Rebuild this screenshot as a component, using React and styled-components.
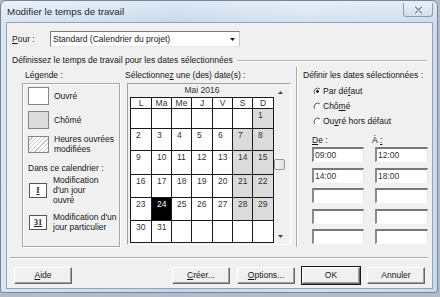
import React from 'react';
import styled, { createGlobalStyle } from 'styled-components';

const Global = createGlobalStyle`
  html, body { margin: 0; padding: 0; }
  body {
    width: 440px; height: 297px; overflow: hidden;
    background: #b3bcc6;
    font-family: "Liberation Sans", Arial, sans-serif;
    color: #151515;
  }
  u { text-decoration: underline; text-underline-offset: 1px; }
`;

const Window = styled.div`
  width: 438px; height: 293px; box-sizing: border-box;
  border: 1px solid #75869a;
  border-radius: 6px 6px 3px 3px;
  background: linear-gradient(90deg, rgba(255,255,255,0.35), rgba(255,255,255,0) 40%, rgba(255,255,255,0.25) 70%, rgba(255,255,255,0.1)),
    linear-gradient(180deg, #dfe9f5 0px, #c9d9ec 21px, #c4d5e9 100%);
  padding: 0 4px 3px 5px;
  display: flex; flex-direction: column;
`;

const TitleBar = styled.div`
  height: 21px; display: flex; justify-content: space-between; align-items: center;
  padding-left: 1px;
`;

const Title = styled.span`
  font-family: "Liberation Sans", Arial, sans-serif;
  font-size: 9.8px; color: #1c2733; line-height: 12px; margin-top: 1px;
`;

const CloseBtn = styled.div`
  align-self: flex-start; margin-top: 2px;
  width: 30px; height: 14px; box-sizing: border-box;
  border: 1px solid #8b9db3; border-top: none;
  border-radius: 0 0 3px 3px;
  background: linear-gradient(180deg, #e8f0f9, #cfdcec);
  display: flex; align-items: center; justify-content: center;
`;

const Client = styled.div`
  flex: 1; box-sizing: border-box;
  border: 1px solid #93a4b8;
  background: #f0f0f0;
  display: flex; flex-direction: column;
  font-size: 8.5px; line-height: 11px;
`;

const PourRow = styled.div`
  margin-top: 8px; padding-left: 5px; height: 16px;
  display: flex; align-items: center;
`;

const PourLabel = styled.span`
  width: 38px;
`;

const Combo = styled.div`
  width: 190px; height: 16px; box-sizing: border-box;
  background: #fff;
  border-top: 1px solid #7c7c7c; border-left: 1px solid #7c7c7c;
  border-right: 1px solid #c8c8c8; border-bottom: 1px solid #e6e6e6;
  display: flex; align-items: center; justify-content: space-between;
  padding-left: 2px;
`;

const ComboArrow = styled.div`
  width: 12px; height: 12px; margin-right: 1px;
  display: flex; align-items: center; justify-content: center;
`;

const GroupHeader = styled.div`
  margin-top: 8px; padding: 0 5px; height: 11px;
  display: flex; align-items: center;
`;

const Etched = styled.div`
  flex: 1; margin-left: 4px; height: 0;
  border-top: 1px solid #b4b4b4; border-bottom: 1px solid #fff;
`;

const Columns = styled.div`
  margin-top: 4px; padding-left: 15px; height: 177px;
  display: flex;
`;

const LegendCol = styled.div`
  width: 98px; display: flex; flex-direction: column;
`;

const ColLabel = styled.div`
  height: 11px; padding-left: ${p => p.$pl || 0}px; white-space: nowrap;
`;

const LegendPanel = styled.div`
  margin-top: 2px; height: 164px; box-sizing: border-box;
  border: 1px solid #a8a8a8;
  box-shadow: inset 1px 1px 0 #fff, 1px 1px 0 #fff;
  padding: 3px 2px 0 5px;
  display: flex; flex-direction: column;
`;

const LegendItem = styled.div`
  display: flex; align-items: center; gap: 5px;
  height: ${p => p.$h}px; margin-top: ${p => p.$mt || 0}px;
  white-space: nowrap; line-height: 10px;
`;

const Swatch = styled.div`
  width: 21px; height: ${p => p.$h || 18}px; box-sizing: border-box; flex: none;
  border: 1px solid #858585;
  background: ${p => p.$kind === 'off' ? '#dcdcdc' : p.$kind === 'hatch'
    ? 'repeating-linear-gradient(135deg, #fff 0 2px, #c4c4c4 2px 3px)' : '#fff'};
`;

const IconBox = styled.div`
  width: 18px; height: 15px; box-sizing: border-box; flex: none;
  margin: 0 1px;
  border: 1px solid #555; background: #fff;
  display: flex; align-items: center; justify-content: center;
  font-family: "Liberation Serif", "Times New Roman", serif;
  font-weight: bold; font-size: 8.5px; color: #222;
  text-decoration: underline; text-underline-offset: 1px;
`;

const Caption = styled.div`
  margin-top: ${p => p.$mt}px; height: 11px; padding-left: 0; white-space: nowrap;
`;

const CalendarCol = styled.div`
  margin-left: 5px; display: flex; flex-direction: column;
`;

const CalBox = styled.div`
  margin: 2px 0 0 2px; width: 164px; height: 162px; box-sizing: border-box;
  border-top: 1px solid #a0a0a0; border-left: 1px solid #a0a0a0;
  border-right: 1px solid #fff; border-bottom: 1px solid #fff;
  padding: 0 2px 0 2px;
  display: flex;
`;

const MonthArea = styled.div`
  display: flex; flex-direction: column;
`;

const MonthTitle = styled.div`
  margin-top: 1px; height: 11px; text-align: center; color: #333;
`;

const Grid = styled.div`
  margin-top: 1px;
  display: grid;
  grid-template-columns: 20px 19px 19px 20px 19px 19px 20px;
  grid-template-rows: 10px 19px 21px 23px 22px 22px 21px;
  gap: 1px; padding: 1px;
  background: #1a1a1a;
`;

const Cell = styled.div`
  background: ${p => p.$sel ? '#000' : p.$we ? '#dbdbdb' : '#fff'};
  color: ${p => p.$sel ? '#fff' : '#333'};
  font-size: 8.5px; line-height: 10px;
  padding: ${p => p.$head ? '0' : '1px 0 0 5px'};
  text-align: ${p => p.$head ? 'center' : 'left'};
`;

const ScrollCol = styled.div`
  width: 14px; display: flex; flex-direction: column; align-items: flex-start;
  padding: 7px 0 6px 0; box-sizing: border-box;
`;

const ScrollArrow = styled.svg`
  margin-left: 4px; margin-top: ${p => p.$bottom ? 'auto' : '0'}; display: block;
`;

const Thumb = styled.div`
  margin-top: 65px; width: 11px; height: 11px; box-sizing: border-box;
  border: 1px solid #979797; border-radius: 2px;
  background: linear-gradient(90deg, #f6f6f6, #e2e2e2);
`;

const VSep = styled.div`
  margin: -3px 0 0 5px; height: 180px; width: 0;
  border-left: 1px solid #a8a8a8; border-right: 1px solid #fff;
`;

const DatesCol = styled.div`
  margin-left: 5px; flex: 1; display: flex; flex-direction: column;
`;

const Radios = styled.div`
  margin-top: 4px; padding-left: 10px;
  display: flex; flex-direction: column; gap: 3px;
`;

const RadioRow = styled.div`
  height: 12px; display: flex; align-items: center; gap: 1px; white-space: nowrap;
`;

const TimeLabels = styled.div`
  margin-top: 8px; padding-left: 9px; height: 11px;
  display: grid; grid-template-columns: 52px 53px; column-gap: 11px;
`;

const TimeLabel = styled.span`
  margin-left: ${p => p.$ml || 0}px;
`;

const TimeGrid = styled.div`
  margin-top: 1px; padding-left: 9px;
  display: grid; grid-template-columns: 52px 53px; column-gap: 11px; row-gap: 5.5px;
`;

const TimeInput = styled.div`
  height: 15px; box-sizing: border-box;
  background: #fff;
  border-top: 2px solid #777; border-left: 2px solid #8a8a8a;
  border-right: 1px solid #e3e3e3; border-bottom: 1px solid #fff;
  padding-left: 1px; line-height: 12px; color: #333;
`;

const HSep = styled.div`
  margin: 10px 4px 0 3px; height: 0;
  border-top: 1px solid #a8a8a8; border-bottom: 1px solid #fff;
`;

const ButtonRow = styled.div`
  margin-top: 8px; padding: 0 7px; height: 17px;
  display: flex; gap: 7px;
`;

const Spacer = styled.div`flex: 1;`;

const Button = styled.div`
  width: 58px; height: 17px; box-sizing: border-box;
  background: #f0f0f0;
  border-top: 1px solid #fff; border-left: 1px solid #fff;
  border-right: 1px solid #6a6a6a; border-bottom: 1px solid #6a6a6a;
  box-shadow: ${p => p.$def ? '0 0 0 1px #1a1a1a, ' : ''}inset -1px -1px 0 #a0a0a0;
  display: flex; align-items: center; justify-content: center;
  color: #151515;
`;

const Radio = ({ on }) => (
  <svg width="9" height="9" viewBox="0 0 9 9" style={{ flex: 'none' }}>
    <circle cx="4.5" cy="4.5" r="3.5" fill="#fff" />
    <path d="M2.03 6.97 A3.5 3.5 0 0 1 6.97 2.03" fill="none" stroke="#505050" strokeWidth="1" />
    <path d="M6.97 2.03 A3.5 3.5 0 0 1 2.03 6.97" fill="none" stroke="#f4f4f4" strokeWidth="1" />
    {on && <circle cx="4.5" cy="4.5" r="1.4" fill="#111" />}
  </svg>
);

const heads = ['L', 'Ma', 'Me', 'J', 'V', 'S', 'D'];

export default function App() {
  const cells = [];
  for (let i = 0; i < 42; i++) {
    const day = i - 5;
    const col = i % 7;
    const valid = day >= 1 && day <= 31;
    cells.push(
      <Cell key={i} $we={valid && col >= 5} $sel={day === 24}>
        {valid ? day : ''}
      </Cell>
    );
  }
  const times = [['09:00', '12:00'], ['14:00', '18:00'], ['', ''], ['', ''], ['', '']];
  return (
    <>
      <Global />
      <Window>
        <TitleBar>
          <Title>Modifier le temps de travail</Title>
          <CloseBtn>
            <svg width="9" height="8" viewBox="0 0 9 8">
              <path d="M1.5 1 L7.5 7 M7.5 1 L1.5 7" stroke="#fff" strokeWidth="3" strokeLinecap="round" />
              <path d="M1.5 1 L7.5 7 M7.5 1 L1.5 7" stroke="#6c7a8c" strokeWidth="1.4" strokeLinecap="round" />
            </svg>
          </CloseBtn>
        </TitleBar>
        <Client>
          <PourRow>
            <PourLabel><u>P</u>our :</PourLabel>
            <Combo>
              <span>Standard (Calendrier du projet)</span>
              <ComboArrow>
                <svg width="5" height="3" viewBox="0 0 5 3"><path d="M0 0 H5 L2.5 3 Z" fill="#111" /></svg>
              </ComboArrow>
            </Combo>
          </PourRow>
          <GroupHeader>
            <span>Définissez le temps de travail pour les dates sélectionnées</span>
            <Etched />
          </GroupHeader>
          <Columns>
            <LegendCol>
              <ColLabel $pl={3}>Légende :</ColLabel>
              <LegendPanel>
                <LegendItem $h={18}><Swatch $kind="work" /><span>Ouvré</span></LegendItem>
                <LegendItem $h={18} $mt={6}><Swatch $kind="off" /><span>Chômé</span></LegendItem>
                <LegendItem $h={20} $mt={5}><Swatch $kind="hatch" $h={17} /><span>Heures ouvrées<br />modifiées</span></LegendItem>
                <Caption $mt={9}>Dans ce calendrier :</Caption>
                <LegendItem $h={30} $mt={1}><IconBox>I</IconBox><span>Modification<br />d'un jour<br />ouvré</span></LegendItem>
                <LegendItem $h={20} $mt={7}><IconBox>31</IconBox><span>Modification d'un<br />jour particulier</span></LegendItem>
              </LegendPanel>
            </LegendCol>
            <CalendarCol>
              <ColLabel>Sélectionne<u>z</u> une (des) date(s) :</ColLabel>
              <CalBox>
                <MonthArea>
                  <MonthTitle>Mai 2016</MonthTitle>
                  <Grid>
                    {heads.map(h => <Cell key={h} $head>{h}</Cell>)}
                    {cells}
                  </Grid>
                </MonthArea>
                <ScrollCol>
                  <ScrollArrow width="5" height="3" viewBox="0 0 5 3"><path d="M0 3 H5 L2.5 0 Z" fill="#444" /></ScrollArrow>
                  <Thumb />
                  <ScrollArrow $bottom width="5" height="3" viewBox="0 0 5 3"><path d="M0 0 H5 L2.5 3 Z" fill="#444" /></ScrollArrow>
                </ScrollCol>
              </CalBox>
            </CalendarCol>
            <VSep />
            <DatesCol>
              <ColLabel>Définir les dates sélectionnées :</ColLabel>
              <Radios>
                <RadioRow><Radio on /><span>Par dé<u>f</u>aut</span></RadioRow>
                <RadioRow><Radio /><span>Chô<u>m</u>é</span></RadioRow>
                <RadioRow><Radio /><span>Ou<u>v</u>ré hors défaut</span></RadioRow>
              </Radios>
              <TimeLabels>
                <TimeLabel><u>D</u>e :</TimeLabel>
                <TimeLabel $ml={-3}>À <u>:</u></TimeLabel>
              </TimeLabels>
              <TimeGrid>
                {times.flatMap((r, i) => r.map((t, j) => <TimeInput key={i + '-' + j}>{t}</TimeInput>))}
              </TimeGrid>
            </DatesCol>
          </Columns>
          <HSep />
          <ButtonRow>
            <Button><u>A</u>ide</Button>
            <Spacer />
            <Button><u>C</u>réer...</Button>
            <Button><u>O</u>ptions...</Button>
            <Button $def>OK</Button>
            <Button>Annuler</Button>
          </ButtonRow>
        </Client>
      </Window>
    </>
  );
}
